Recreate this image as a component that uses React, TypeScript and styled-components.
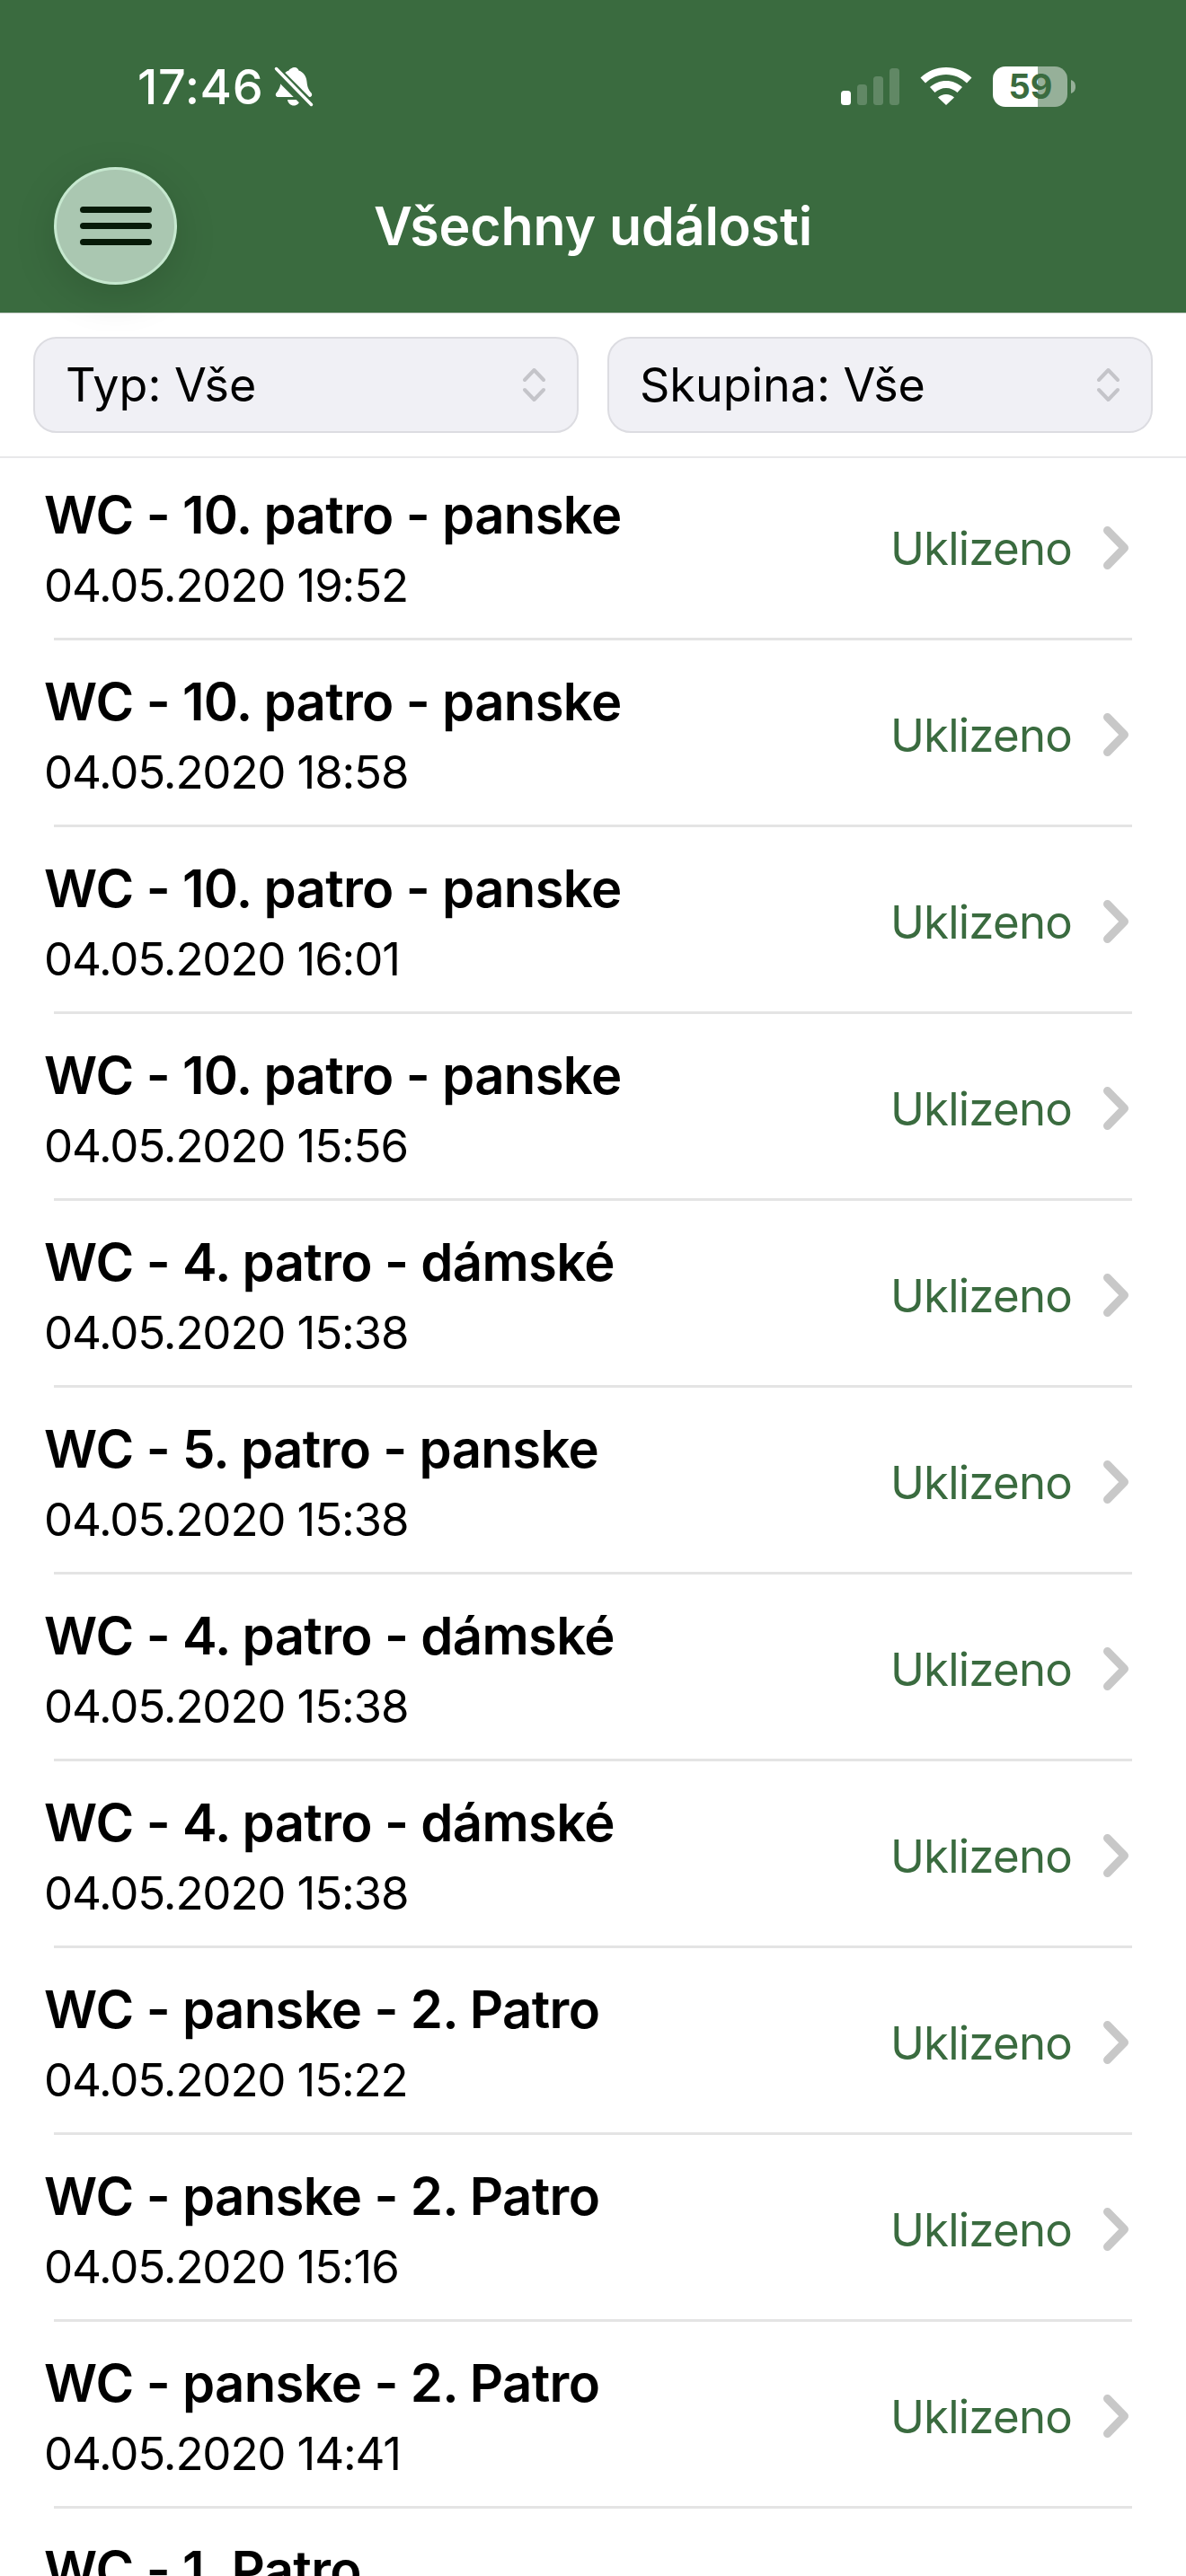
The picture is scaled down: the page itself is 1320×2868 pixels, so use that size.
import React from "react";
import styled, { createGlobalStyle } from "styled-components";

const GREEN = "#3a6b3f";

const Global = createGlobalStyle`
  html, body { margin: 0; padding: 0; background: #fff; height: 2868px; overflow: hidden; }
  * { box-sizing: border-box; }
  body { font-family: Inter, "Liberation Sans", sans-serif; color: #000; }
`;

const Page = styled.div`
  width: 1320px;
  height: 2868px;
  overflow: hidden;
  background: #fff;
`;

const Header = styled.header`
  height: 349px;
  background: ${GREEN};
  border-bottom: 1px solid #c9cfc9;
  display: flex;
  flex-direction: column;
`;

const StatusBar = styled.div`
  height: 186px;
  padding: 74px 123px 0 153px;
  display: flex;
  justify-content: space-between;
  align-items: flex-start;
`;

const StatusLeft = styled.div`
  display: flex;
  align-items: center;
  gap: 12px;
  height: 45px;
`;

const Clock = styled.span`
  font-size: 54px;
  line-height: 45px;
  font-weight: 500;
  color: #fff;
  letter-spacing: 0.6px;
`;

const StatusRight = styled.div`
  display: flex;
  align-items: flex-end;
  gap: 23px;
  height: 45px;
`;

const NavRow = styled.div`
  display: grid;
  grid-template-columns: 137px 1fr 137px;
  padding: 0 60px;
  align-items: center;
`;

const MenuButton = styled.button`
  position: relative;
  z-index: 2;
  width: 137px;
  height: 131px;
  padding: 0;
  border: 3px solid #c6e8cf;
  border-radius: 50%;
  background: #aac7b1;
  box-shadow: 0 12px 48px rgba(0, 0, 0, 0.14);
  display: flex;
  flex-direction: column;
  align-items: center;
  justify-content: center;
  gap: 11px;
`;

const MenuLine = styled.span`
  display: block;
  width: 80px;
  height: 7px;
  border-radius: 4px;
  background: #071a08;
`;

const Title = styled.h1`
  margin: 0;
  text-align: center;
  color: #fff;
  font-size: 59px;
  line-height: 70px;
  font-weight: 600;
  letter-spacing: -0.1px;
`;

const FilterBar = styled.div`
  display: grid;
  grid-template-columns: 1fr 1fr;
  gap: 32px;
  padding: 26px 37px;
  border-bottom: 2px solid #e8e8ea;
  height: 161px;
`;

const Select = styled.div`
  height: 107px;
  border: 2px solid #dcdce1;
  border-radius: 26px;
  background: #f0f0f5;
  padding: 0 35px 0 34px;
  display: flex;
  align-items: center;
  justify-content: space-between;
  font-size: 52px;
  font-weight: 400;
`;

const List = styled.div`
  display: flex;
  flex-direction: column;
`;

const Row = styled.div`
  height: 205px;
  padding: 5px 64px 0 49px;
  display: flex;
  align-items: center;
  justify-content: space-between;
  &:first-child { height: 200px; padding-top: 0; }
`;

const Info = styled.div`
  display: flex;
  flex-direction: column;
  gap: 12px;
`;

const RowTitle = styled.div`
  font-size: 58px;
  line-height: 72px;
  font-weight: 600;
  letter-spacing: -0.65px;
  white-space: nowrap;
`;

const RowDate = styled.div`
  min-height: 62px;
  font-size: 51px;
  line-height: 62px;
  font-weight: 400;
  letter-spacing: -1.15px;
`;

const Status = styled.div`
  display: flex;
  align-items: center;
  gap: 35px;
  font-size: 51px;
  font-weight: 400;
  color: ${GREEN};
  letter-spacing: -0.8px;
`;

const Separator = styled.div`
  height: 3px;
  margin: 0 60px;
  background: #e4e4e4;
`;

const Bell = () => (
  <svg width="44" height="45" viewBox="0 0 44 45">
    <path
      fill="#fff"
      d="M23 1c2.500 0 4 2 4.500 3.500C33 6.500 36 11 36.500 17c.5 6 2 9 5 12.500 1.500 2 .5 4.500-2 4.500H4.500c-2.500 0-3.500-2.500-2-4.500C5.500 26 7 23 7.500 17 8 11 11 6.500 16.500 4.500 17 3 20.500 1 23 1z"
    />
    <path fill="#fff" d="M15 37h14c-.5 4-3.500 6.500-7 6.500S15.500 41 15 37z" />
    <line x1="-2" y1="4" x2="38" y2="44" stroke={GREEN} strokeWidth="9" />
    <line x1="2" y1="3" x2="42" y2="43" stroke={GREEN} strokeWidth="9" />
    <line x1="2.500" y1="2.500" x2="41.500" y2="42.500" stroke="#fff" strokeWidth="3.500" strokeLinecap="round" />
  </svg>
);

const Signal = () => (
  <svg width="65" height="41" viewBox="0 0 65 41" style={{ marginBottom: 2 }}>
    <rect x="0" y="25" width="11" height="16" rx="3.500" fill="#fff" />
    <rect x="18" y="18" width="11" height="23" rx="3.500" fill="#fff" fillOpacity=".2" />
    <rect x="36" y="9" width="11" height="32" rx="3.500" fill="#fff" fillOpacity=".2" />
    <rect x="54" y="0" width="11" height="41" rx="3.500" fill="#fff" fillOpacity=".2" />
  </svg>
);

const Wifi = () => (
  <svg width="58" height="42" viewBox="0 0 58 42" style={{ marginBottom: 2 }}>
    <path
      fill="#fff"
      d="M29 0c11 0 21 4.300 28.500 11.500L52 17.500C46 11.700 37.900 8 29 8S12 11.700 6 17.500L.5 11.500C8 4.300 18 0 29 0z"
    />
    <path
      fill="#fff"
      d="M29 15c7 0 13.300 2.700 18 7.100L41.500 28C38.200 25 33.800 23 29 23s-9.200 2-12.500 5L11 22.100C15.700 17.700 22 15 29 15z"
    />
    <path fill="#fff" d="M29 30c3.500 0 6.600 1.300 9 3.500L29 42l-9-8.500c2.400-2.200 5.500-3.500 9-3.500z" />
  </svg>
);

const Battery = () => (
  <svg width="92" height="45" viewBox="0 0 92 45">
    <defs>
      <clipPath id="battery-body">
        <rect x="0" y="0" width="83" height="45" rx="14" />
      </clipPath>
    </defs>
    <g clipPath="url(#battery-body)">
      <rect x="0" y="0" width="50" height="45" fill="#fff" />
      <rect x="50" y="0" width="33" height="45" fill="#fff" fillOpacity=".47" />
    </g>
    <path d="M87 15c3 .8 5 3.500 5 7.500s-2 6.700-5 7.500z" fill="#fff" fillOpacity=".47" />
    <text
      x="42"
      y="36"
      textAnchor="middle"
      fontFamily="Inter, 'Liberation Sans', sans-serif"
      fontSize="38"
      fontWeight="700"
      fill={GREEN}
    >
      59
    </text>
  </svg>
);

const Updown = () => (
  <svg width="25" height="37" viewBox="0 0 25 37" fill="none" stroke="#c4c4c9" strokeWidth="4" strokeLinecap="round" strokeLinejoin="round">
    <path d="M2 13L12.500 2 23 13" />
    <path d="M2 24L12.500 35 23 24" />
  </svg>
);

const Chevron = () => (
  <svg width="28" height="48" viewBox="0 0 28 48" fill="none" stroke="#c8c8c8" strokeWidth="9" strokeLinecap="round" strokeLinejoin="round">
    <path d="M4.500 4.500L23.500 24 4.500 43.500" />
  </svg>
);

const events: [string, string][] = [
  ["WC - 10. patro - panske", "04.05.2020 19:52"],
  ["WC - 10. patro - panske", "04.05.2020 18:58"],
  ["WC - 10. patro - panske", "04.05.2020 16:01"],
  ["WC - 10. patro - panske", "04.05.2020 15:56"],
  ["WC - 4. patro - dámské", "04.05.2020 15:38"],
  ["WC - 5. patro - panske", "04.05.2020 15:38"],
  ["WC - 4. patro - dámské", "04.05.2020 15:38"],
  ["WC - 4. patro - dámské", "04.05.2020 15:38"],
  ["WC - panske - 2. Patro", "04.05.2020 15:22"],
  ["WC - panske - 2. Patro", "04.05.2020 15:16"],
  ["WC - panske - 2. Patro", "04.05.2020 14:41"],
  ["WC - 1. Patro", ""],
];

export default function App() {
  return (
    <Page>
      <Global />
      <Header>
        <StatusBar>
          <StatusLeft>
            <Clock>17:46</Clock>
            <Bell />
          </StatusLeft>
          <StatusRight>
            <Signal />
            <Wifi />
            <Battery />
          </StatusRight>
        </StatusBar>
        <NavRow>
          <MenuButton aria-label="Menu">
            <MenuLine />
            <MenuLine />
            <MenuLine />
          </MenuButton>
          <Title>Všechny události</Title>
          <span />
        </NavRow>
      </Header>
      <FilterBar>
        <Select>
          Typ: Vše
          <Updown />
        </Select>
        <Select>
          Skupina: Vše
          <Updown />
        </Select>
      </FilterBar>
      <List>
        {events.map(([name, date], i) => (
          <React.Fragment key={i}>
            <Row>
              <Info>
                <RowTitle>{name}</RowTitle>
                <RowDate>{date}</RowDate>
              </Info>
              <Status>
                Uklizeno
                <Chevron />
              </Status>
            </Row>
            <Separator />
          </React.Fragment>
        ))}
      </List>
    </Page>
  );
}
